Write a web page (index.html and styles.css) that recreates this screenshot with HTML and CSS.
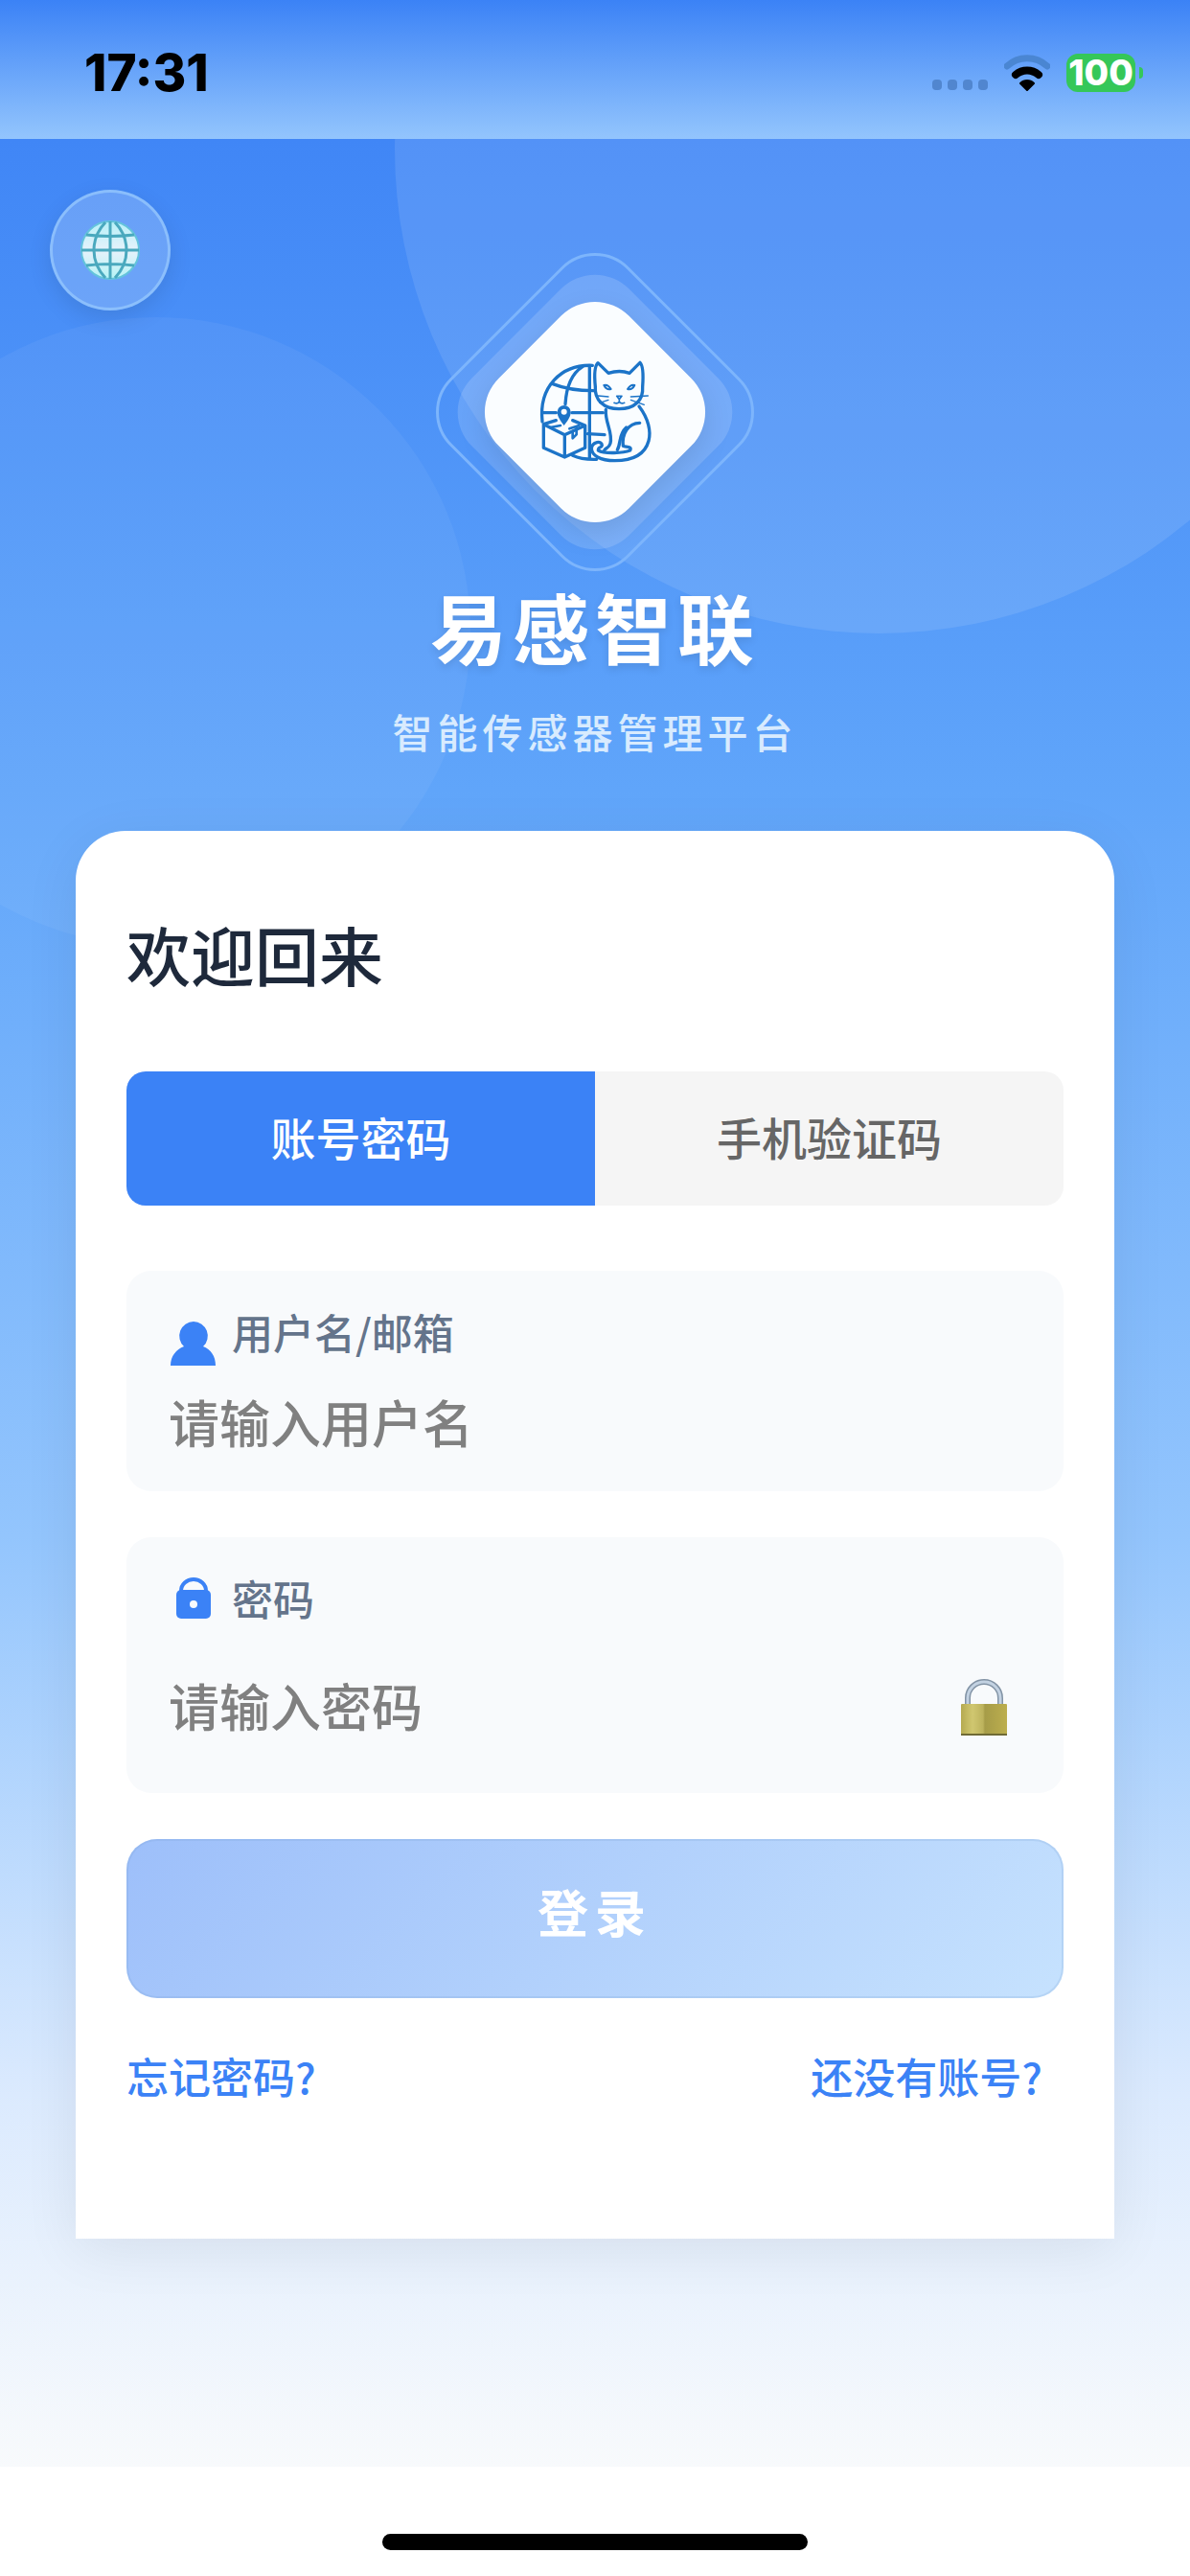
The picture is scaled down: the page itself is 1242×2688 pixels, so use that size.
FILE: index.html
```html
<!DOCTYPE html>
<html lang="zh-CN">
<head>
    <meta charset="UTF-8">
    <meta name="viewport" content="width=device-width, initial-scale=1.0">
    <title>易感智联 - 登录</title>
    <link rel="stylesheet" href="styles.css">
</head>
<body>
    <header class="status-bar">
        <span class="time">17:31</span>
        <div class="status-icons">
            <div class="signal"><i></i><i></i><i></i><i></i></div>
            <svg class="wifi" viewBox="0 0 48 38" aria-hidden="true">
                <path d="M3 12C15 1 33 1 45 12" fill="none" stroke="#4a86d2" stroke-width="7" stroke-linecap="round"/>
                <path d="M12 21C19 15 29 15 36 21" fill="none" stroke="#000" stroke-width="8" stroke-linecap="round"/>
                <path d="M17 30C21 26 27 26 31 30L24 37Z" stroke="#000" stroke-width="2" stroke-linejoin="round"/>
            </svg>
            <div class="battery">100</div>
        </div>
    </header>

    <main class="login-page">
        <div class="circle circle-1"></div>
        <div class="circle circle-2"></div>

        <button class="lang-btn" type="button" aria-label="切换语言">
            <svg viewBox="0 0 64 64" aria-hidden="true">
                <defs>
                    <linearGradient id="globe" x1="0" y1="0" x2="0" y2="1">
                        <stop offset="0" stop-color="#b5f0f8"/>
                        <stop offset="0.5" stop-color="#e6f2fb"/>
                        <stop offset="1" stop-color="#b5f3f5"/>
                    </linearGradient>
                </defs>
                <circle cx="32" cy="32" r="30" fill="url(#globe)" stroke="#63c3dc" stroke-width="2"/>
                <g fill="none" stroke="#4aa9be" stroke-width="3">
                    <path d="M32 2V62M2 32H62M7 16Q32 19 57 16M7 48Q32 45 57 48"/>
                    <path d="M27 3C11 20 11 44 27 61M37 3C53 20 53 44 37 61"/>
                </g>
            </svg>
        </button>

        <section class="brand">
            <div class="logo">
                <div class="logo-layer logo-ring"></div>
                <div class="logo-layer logo-halo"></div>
                <div class="logo-layer logo-base"></div>
                <svg class="logo-icon" viewBox="390 400 360 340" aria-hidden="true">
                    <g fill="none" stroke="#1c74c8" stroke-width="10" stroke-linecap="round" stroke-linejoin="round">
                        <!-- globe -->
                        <path d="M405 600C393 490 465 420 562 424"/>
                        <path d="M553 425V712"/>
                        <path d="M532 427C495 450 480 495 477 545"/>
                        <path d="M438 482C475 497 520 503 565 503"/>
                        <path d="M405 572H448M498 572H595M547 638L600 641"/>
                        <path d="M500 706C530 720 555 718 575 718"/>
                        <!-- cat -->
                        <path d="M571 490C567 450 569 425 579 416L612 448C635 441 658 441 678 448L711 415C721 425 722 450 719 490C722 532 695 560 645 560C597 560 568 532 571 490Z"/>
                        <path d="M708 552C737 590 746 630 738 660C726 704 690 722 632 722C585 722 560 705 559 684C561 662 592 658 592 674C590 684 580 676 580 690C600 702 660 698 680 690C687 676 665 680 658 676C654 640 672 605 710 604"/>
                        <path d="M604 562C600 600 627 635 618 668C614 684 602 682 599 690"/>
                        <path d="M668 618C643 640 652 668 640 688"/>
                        <path d="M598 486Q610 482 620 498Q606 502 598 486ZM694 486Q682 482 672 498Q686 502 694 486Z" stroke-width="6"/>
                        <path d="M638 520H654L646 530ZM646 530V538M630 541Q640 546 646 538Q652 546 662 541" stroke-width="5"/>
                        <path d="M580 519L612 522M584 541L612 532M682 522L736 519M682 532L724 547" stroke-width="4"/>
                        <!-- parcel -->
                        <path d="M409 608V682L475 711L539 682V612L475 641ZM475 641V711M409 608L448 596M539 612L500 596"/>
                        <path d="M430 618L462 612M490 622L520 612M500 630V652L512 640V622" stroke-width="8"/>
                    </g>
                    <path d="M473 612C456 590 452 580 452 570A21 21 0 0 1 494 570C494 580 489 592 473 612Z" fill="#1c74c8"/>
                    <circle cx="473" cy="569" r="9" fill="#fff"/>
                </svg>
            </div>
            <h1 class="title">易感智联</h1>
            <p class="subtitle">智能传感器管理平台</p>
        </section>

        <form class="card">
            <h2 class="welcome">欢迎回来</h2>

            <div class="tabs">
                <button class="tab active" type="button">账号密码</button>
                <button class="tab" type="button">手机验证码</button>
            </div>

            <div class="field">
                <label class="field-label" for="username">
                    <svg class="field-icon" viewBox="0 0 50 60" aria-hidden="true">
                        <path d="M26 13A15 15 0 0 1 36 39C44 42 49 49 49 59H2C2 49 8 42 16 39A15 15 0 0 1 26 13Z"/>
                    </svg>
                    用户名/邮箱
                </label>
                <input type="text" id="username" placeholder="请输入用户名">
            </div>

            <div class="field">
                <label class="field-label" for="password">
                    <svg class="field-icon" viewBox="0 0 50 60" aria-hidden="true">
                        <path d="M13 18V16A13 12 0 0 1 39 16V18" fill="none" stroke="#3b82f6" stroke-width="4"/>
                        <rect x="8" y="15" width="36" height="30" rx="5"/>
                        <circle cx="26" cy="30" r="4" fill="#f8fafc"/>
                    </svg>
                    密码
                </label>
                <div class="password-row">
                    <input type="password" id="password" placeholder="请输入密码">
                    <button class="toggle-btn" type="button" aria-label="显示密码">
                        <svg viewBox="0 0 50 60" aria-hidden="true">
                            <defs>
                                <linearGradient id="brass" x1="0" y1="0" x2="1" y2="0">
                                    <stop offset="0" stop-color="#b5aa50"/>
                                    <stop offset="0.25" stop-color="#d0c770"/>
                                    <stop offset="0.48" stop-color="#bdb35d"/>
                                    <stop offset="0.52" stop-color="#a69c48"/>
                                    <stop offset="1" stop-color="#bcae4e"/>
                                </linearGradient>
                            </defs>
                            <path d="M8 28V20A17 17 0 0 1 42 20V28" fill="none" stroke="#8293a5" stroke-width="6"/>
                            <path d="M8 28V20A17 17 0 0 1 42 20V28" fill="none" stroke="#c3d2e2" stroke-width="3"/>
                            <rect x="1" y="26" width="48" height="33" rx="1" fill="url(#brass)"/>
                            <rect x="1" y="57" width="48" height="2" fill="#6f6a35"/>
                        </svg>
                    </button>
                </div>
            </div>

            <button class="login-btn" type="submit">登录</button>

            <div class="links">
                <a href="#forgot">忘记密码?</a>
                <a href="#register">还没有账号?</a>
            </div>
        </form>
    </main>

    <footer class="home-bar">
        <div class="home-indicator"></div>
    </footer>
</body>
</html>
```

FILE: styles.css
```css
* {
    box-sizing: border-box;
    margin: 0;
    padding: 0;
}
body {
    display: flex;
    flex-direction: column;
    min-height: 100vh;
    background: #fff;
    font-family: "Noto Sans CJK SC", sans-serif;
}
button, input {
    font-family: inherit;
    border: none;
    background: none;
}
button {
    cursor: pointer;
}

/* status bar */
.status-bar {
    display: flex;
    justify-content: space-between;
    align-items: center;
    height: 145px;
    padding: 6px 48px 0 88px;
    background: linear-gradient(180deg, #3b82f6 0%, #93c5fd 100%);
    font-family: Inter, sans-serif;
    font-weight: 800;
}
.time {
    font-size: 53px;
    color: #000;
}
.status-icons {
    display: flex;
    align-items: center;
    gap: 17px;
}
.signal {
    display: flex;
    align-self: flex-end;
    gap: 6px;
    padding-bottom: 2px;
}
.signal i {
    width: 10px;
    height: 11px;
    border-radius: 4px;
    background: #5186cf;
}
.wifi {
    width: 48px;
    height: 38px;
}
.battery {
    position: relative;
    width: 72px;
    height: 40px;
    margin-right: 9px;
    border-radius: 12px;
    background: #35c759;
    color: #fff;
    font-size: 37px;
    line-height: 40px;
    text-align: center;
}
.battery::after {
    content: "";
    position: absolute;
    right: -8px;
    top: 14px;
    width: 4px;
    height: 12px;
    border-radius: 0 4px 4px 0;
    background: #35c759;
}

/* page */
.login-page {
    position: relative;
    flex: 1;
    padding: 153px 79px 238px;
    overflow: hidden;
    background: linear-gradient(180deg, #4086f6 0%, #60a5fa 28%, #93c5fd 60%, #dbeafe 84%, #f8fafc 100%);
}
.circle {
    position: absolute;
    border-radius: 50%;
}
.circle-1 {
    top: -494px;
    right: -180px;
    width: 1010px;
    height: 1010px;
    background: rgba(255, 255, 255, 0.1);
}
.circle-2 {
    top: 186px;
    left: -165px;
    width: 656px;
    height: 656px;
    background: rgba(255, 255, 255, 0.05);
}
.lang-btn {
    position: absolute;
    top: 53px;
    left: 52px;
    display: flex;
    justify-content: center;
    align-items: center;
    width: 126px;
    height: 126px;
    border: 3px solid rgba(147, 197, 253, 0.8);
    border-radius: 50%;
    background: rgba(255, 255, 255, 0.2);
    box-shadow: 0 8px 24px rgba(0, 0, 0, 0.1);
}
.lang-btn svg {
    width: 64px;
    height: 64px;
}

/* brand */
.brand {
    position: relative;
    display: flex;
    flex-direction: column;
    align-items: center;
    color: #fff;
}
.logo {
    display: grid;
    place-items: center;
    width: 264px;
    height: 264px;
}
.logo-layer, .logo-icon {
    grid-area: 1 / 1;
}
.logo-layer {
    border-radius: 50px;
    transform: rotate(45deg);
}
.logo-ring {
    width: 264px;
    height: 264px;
    border: 3px solid #7db5fc;
}
.logo-halo {
    width: 232px;
    height: 232px;
    background: rgba(255, 255, 255, 0.15);
}
.logo-base {
    width: 192px;
    height: 192px;
    background: #fafdff;
    box-shadow: 8px 8px 30px rgba(0, 0, 0, 0.1);
}
.logo-icon {
    position: relative;
    width: 120px;
    height: 114px;
}
.title {
    margin-top: 35px;
    font-size: 80px;
    line-height: 110px;
    font-weight: 700;
    letter-spacing: 6px;
    text-shadow: 0 4px 8px rgba(0, 0, 0, 0.1);
}
.subtitle {
    margin-top: 26px;
    font-size: 42px;
    line-height: 60px;
    font-weight: 500;
    letter-spacing: 5px;
    color: #d8ebfe;
}

/* login card */
.card {
    position: relative;
    margin-top: 74px;
    padding: 82px 53px 140px;
    border-radius: 52px 52px 0 0;
    background: #fff;
    box-shadow: 0 12px 60px rgba(0, 0, 0, 0.07);
}
.welcome {
    margin-bottom: 77px;
    font-size: 67px;
    line-height: 92px;
    font-weight: 500;
    color: #1e293b;
}
.tabs {
    display: flex;
    margin-bottom: 68px;
    border-radius: 20px;
    overflow: hidden;
    background: #f5f5f5;
}
.tab {
    flex: 1;
    height: 140px;
    padding-bottom: 6px;
    font-size: 47px;
    font-weight: 500;
    color: #666;
}
.tab.active {
    background: #3b82f6;
    color: #fff;
}
.field {
    margin-bottom: 48px;
    padding: 40px 44px 29px;
    border-radius: 26px;
    background: #f8fafc;
}
.field-label {
    display: flex;
    gap: 16px;
    height: 50px;
    margin-bottom: 28px;
    font-size: 43px;
    line-height: 46px;
    font-weight: 500;
    color: #64748b;
}
.field-icon {
    flex: none;
    width: 50px;
    height: 60px;
    fill: #3b82f6;
}
.field input {
    display: block;
    width: 100%;
    height: 83px;
    padding-bottom: 6px;
    font-size: 53px;
    font-weight: 500;
    color: #1e293b;
    outline: none;
}
.field input::placeholder {
    color: #808080;
    opacity: 1;
}
.password-row {
    display: flex;
    align-items: center;
    height: 120px;
}
.toggle-btn {
    flex: none;
    padding: 0 14px;
}
.toggle-btn svg {
    display: block;
    width: 50px;
    height: 60px;
}
.login-btn {
    display: block;
    width: 100%;
    height: 166px;
    padding-bottom: 16px;
    border-radius: 32px;
    background: linear-gradient(135deg, #9dbffa 0%, #c6e2fe 100%);
    box-shadow: inset 0 0 0 2px rgba(120, 160, 210, 0.2);
    font-size: 53px;
    font-weight: 700;
    letter-spacing: 7px;
    color: #fff;
}
.links {
    display: flex;
    justify-content: space-between;
    margin-top: 51px;
    padding-right: 22px;
    font-size: 44px;
    line-height: 60px;
    font-weight: 500;
}
.links a {
    color: #3b82f6;
    text-decoration: none;
}

/* home indicator */
.home-bar {
    display: flex;
    justify-content: center;
    height: 114px;
    padding-top: 70px;
}
.home-indicator {
    width: 444px;
    height: 17px;
    border-radius: 9px;
    background: #000;
}
```
